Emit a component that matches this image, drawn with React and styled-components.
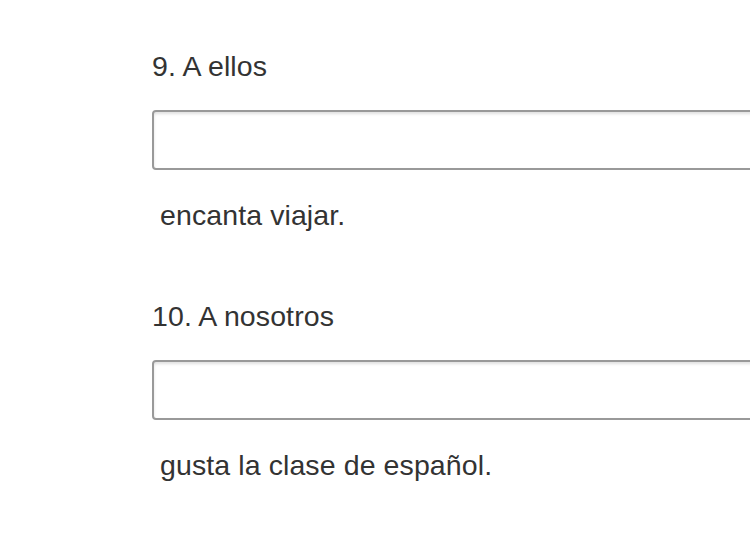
import React from "react";
import styled, { createGlobalStyle } from "styled-components";

const Global = createGlobalStyle`
  html, body { margin: 0; padding: 0; background: #fff; }
  body { font-family: "Liberation Sans", Arial, Helvetica, sans-serif; overflow: hidden; }
`;

const Page = styled.div`
  width: 750px;
  height: 546px;
  overflow: hidden;
  padding: 50px 0 0 152px;
  box-sizing: border-box;
  display: flex;
  flex-direction: column;
  gap: 69px;
`;

const Question = styled.section`
  display: flex;
  flex-direction: column;
`;

const Label = styled.div`
  font-size: 28.5px;
  letter-spacing: 0.1px;
  line-height: 32px;
  color: #333;
  margin-bottom: 28px;
`;

const Field = styled.input`
  width: 700px;
  height: 60px;
  box-sizing: border-box;
  border: 2px solid #999;
  border-radius: 4px;
  box-shadow: inset 0 2px 3px rgba(0, 0, 0, 0.12);
  background: #fff;
  margin: 0;
  padding: 0 12px;
  font: inherit;
  font-size: 28px;
  outline: none;
`;

const Sentence = styled.div`
  font-size: 28.5px;
  letter-spacing: 0.1px;
  line-height: 32px;
  color: #333;
  margin-top: 29px;
  padding-left: 8px;
`;

const items = [
  { label: "9. A ellos", rest: "encanta viajar." },
  { label: "10. A nosotros", rest: "gusta la clase de español." },
];

export default function App() {
  return (
    <>
      <Global />
      <Page>
        {items.map((it) => (
          <Question key={it.label}>
            <Label>{it.label}</Label>
            <Field type="text" aria-label={it.label} />
            <Sentence>{it.rest}</Sentence>
          </Question>
        ))}
      </Page>
    </>
  );
}
